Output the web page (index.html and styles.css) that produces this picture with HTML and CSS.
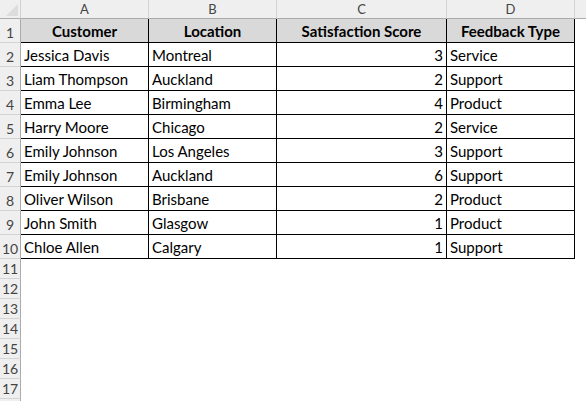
FILE: index.html
```html
<!DOCTYPE html>
<html>
<head>
<meta charset="utf-8">
<link rel="stylesheet" href="styles.css">
</head>
<body>
<div class="sheet">
  <div class="corner"><div class="tri"></div></div>
  <div class="colhead">A</div>
  <div class="colhead">B</div>
  <div class="colhead">C</div>
  <div class="colhead">D</div>
  <div class="colhead last"></div>

  <div class="rowhead">1</div>
  <div class="cell th first">Customer</div>
  <div class="cell th">Location</div>
  <div class="cell th">Satisfaction Score</div>
  <div class="cell th">Feedback Type</div>
  <div class="blank"></div>

  <div class="rowhead">2</div>
  <div class="cell first">Jessica Davis</div>
  <div class="cell">Montreal</div>
  <div class="cell num">3</div>
  <div class="cell">Service</div>
  <div class="blank"></div>

  <div class="rowhead">3</div>
  <div class="cell first">Liam Thompson</div>
  <div class="cell">Auckland</div>
  <div class="cell num">2</div>
  <div class="cell">Support</div>
  <div class="blank"></div>

  <div class="rowhead">4</div>
  <div class="cell first">Emma Lee</div>
  <div class="cell">Birmingham</div>
  <div class="cell num">4</div>
  <div class="cell">Product</div>
  <div class="blank"></div>

  <div class="rowhead">5</div>
  <div class="cell first">Harry Moore</div>
  <div class="cell">Chicago</div>
  <div class="cell num">2</div>
  <div class="cell">Service</div>
  <div class="blank"></div>

  <div class="rowhead">6</div>
  <div class="cell first">Emily Johnson</div>
  <div class="cell">Los Angeles</div>
  <div class="cell num">3</div>
  <div class="cell">Support</div>
  <div class="blank"></div>

  <div class="rowhead">7</div>
  <div class="cell first">Emily Johnson</div>
  <div class="cell">Auckland</div>
  <div class="cell num">6</div>
  <div class="cell">Support</div>
  <div class="blank"></div>

  <div class="rowhead">8</div>
  <div class="cell first">Oliver Wilson</div>
  <div class="cell">Brisbane</div>
  <div class="cell num">2</div>
  <div class="cell">Product</div>
  <div class="blank"></div>

  <div class="rowhead">9</div>
  <div class="cell first">John Smith</div>
  <div class="cell">Glasgow</div>
  <div class="cell num">1</div>
  <div class="cell">Product</div>
  <div class="blank"></div>

  <div class="rowhead">10</div>
  <div class="cell first">Chloe Allen</div>
  <div class="cell">Calgary</div>
  <div class="cell num">1</div>
  <div class="cell">Support</div>
  <div class="blank"></div>

  <div class="rowhead small">11</div><div class="empty"></div>
  <div class="rowhead small">12</div><div class="empty"></div>
  <div class="rowhead small">13</div><div class="empty"></div>
  <div class="rowhead small">14</div><div class="empty"></div>
  <div class="rowhead small">15</div><div class="empty"></div>
  <div class="rowhead small">16</div><div class="empty"></div>
  <div class="rowhead small">17</div><div class="empty"></div>
  <div class="rowhead small"></div><div class="empty"></div>
</div>
</body>
</html>
```
FILE: styles.css
```css
html, body {
  margin: 0;
  padding: 0;
  background: #ffffff;
  overflow: hidden;
}
.sheet {
  display: grid;
  grid-template-columns: 21px 128px 128px 170px 128px 11px;
  grid-template-rows: 19px 24px repeat(9, 24px) repeat(8, 20px);
  font-family: Lato, "Liberation Sans", sans-serif;
  font-size: 15px;
  color: #000;
}
.corner {
  background: #efefef;
  border-right: 1px solid #d0d0d0;
  border-bottom: 1px solid #ababab;
  position: relative;
}
.tri {
  position: absolute;
  right: 2px;
  bottom: 2px;
  width: 0;
  height: 0;
  border-left: 12px solid transparent;
  border-bottom: 12px solid #dcdcdc;
}
.colhead {
  background: #efefef;
  border-right: 1px solid #d4d4d4;
  border-bottom: 1px solid #ababab;
  color: #444;
  font-size: 13px;
  display: flex;
  align-items: center;
  justify-content: center;
}
.colhead.last {
  border-right: none;
}
.rowhead {
  background: #efefef;
  border-right: 1px solid #ababab;
  border-bottom: 1px solid #d4d4d4;
  color: #444;
  font-size: 14px;
  display: flex;
  align-items: flex-end;
  justify-content: center;
  padding-bottom: 1px;
  box-sizing: border-box;
}
.cell {
  border-right: 1px solid #000;
  border-bottom: 1px solid #000;
  display: flex;
  align-items: flex-end;
  padding: 0 3px 2px 3px;
  box-sizing: border-box;
  white-space: nowrap;
  overflow: hidden;
}
.cell.th {
  background: #d9d9d9;
  font-weight: bold;
  justify-content: center;
}
.cell.num {
  justify-content: flex-end;
}
.blank {
  background: #fff;
}
.empty {
  grid-column: 2 / 7;
  background: #fff;
}
```
